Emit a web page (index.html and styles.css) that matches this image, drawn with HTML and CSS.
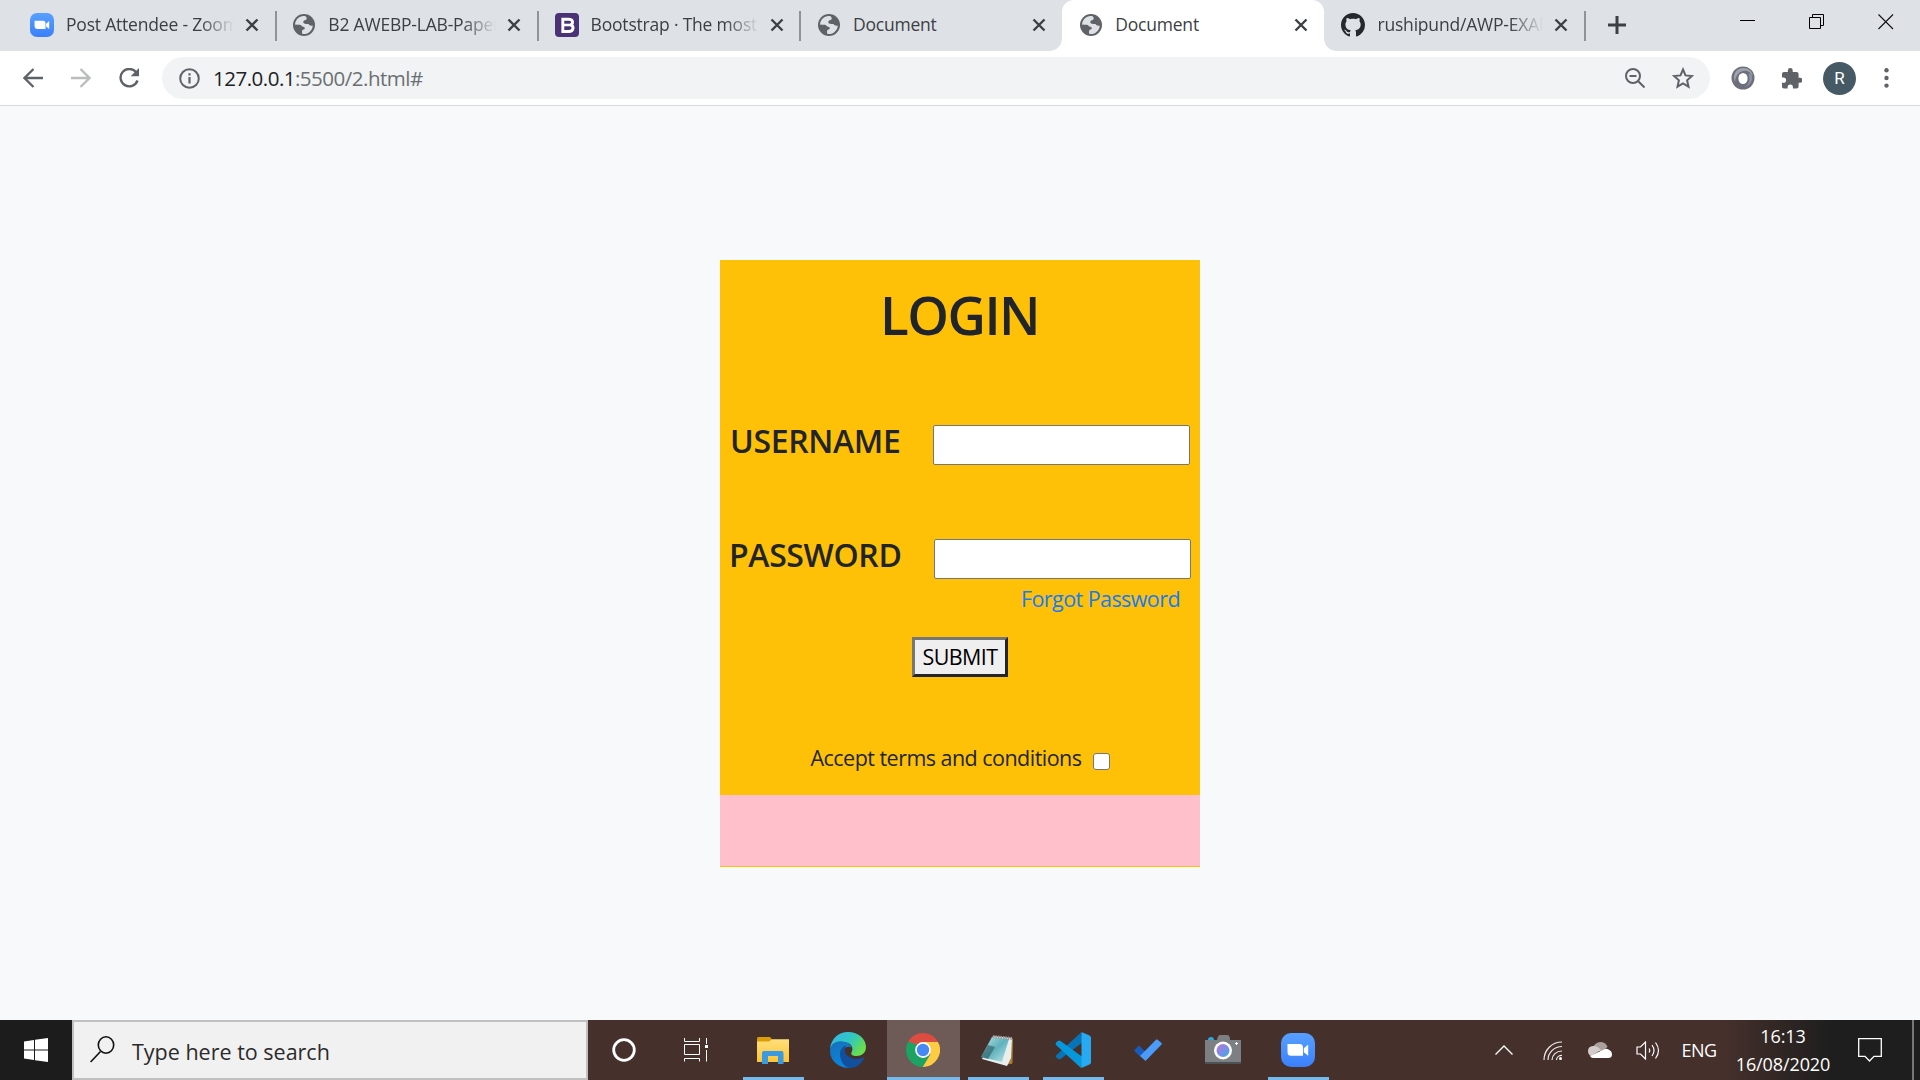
FILE: index.html
```html
<!DOCTYPE html>
<html lang="en">
<head>
<meta charset="utf-8">
<title>Document</title>
<link rel="stylesheet" href="styles.css">
</head>
<body>
<svg class="defs" width="0" height="0">
  <symbol id="globe" viewBox="0 0 24 24"><circle cx="12" cy="12" r="11" fill="#5f6368"/><path d="M13.500 3.200C8 2 3.500 6 3 11.500c2.500.8 6 0 6.500 1.200.6 1.800 3 .6 3.300 2.300.2 1.800-2.600 1.300-2.800 3.200-.1 1.200.2 2.200.4 2.800 5.500.8 10-3.200 10.400-8.500-2 .8-3.500-.3-4.300-1.500-1.600-.2-5 .4-5.200-1.700-.2-2.400 3.200-1.600 3.400-3.500.1-1-.3-1.800-1.200-2.600z" fill="#dee1e6"/></symbol>
  <symbol id="x" viewBox="0 0 14 14"><path d="M1.500 1.500l11 11M12.500 1.500l-11 11" stroke="#3c4043" stroke-width="2.400" fill="none"/></symbol>
  <linearGradient id="zoomBlue" x2="0" y2="1"><stop stop-color="#57a0ff"/><stop offset="1" stop-color="#3b80fb"/></linearGradient>
  <symbol id="zoom" viewBox="0 0 34 34"><rect width="34" height="34" rx="10" fill="url(#zoomBlue)"/><path d="M6.500 11h12a3.500 3.500 0 0 1 3.500 3.500v8.300H10a3.500 3.500 0 0 1-3.500-3.500zM22.800 15.200l4.400-3.700v11.200l-4.400-3.400z" fill="#fff"/></symbol>
</svg>

<header class="tabs">
  <div class="tab"><svg class="fav"><use href="#zoom"/></svg><span class="title faded">Post Attendee - Zoom</span><svg class="close"><use href="#x"/></svg></div>
  <div class="tab"><svg class="fav"><use href="#globe"/></svg><span class="title faded">B2 AWEBP-LAB-Paper</span><svg class="close"><use href="#x"/></svg></div>
  <div class="tab"><svg class="fav" viewBox="0 0 24 24"><rect width="24" height="24" rx="4" fill="#4b3175"/><path d="M7.800 6.300h5.800c5 0 4.800 4.800 1.700 5.500 4.200.9 3.500 6.700-1.500 6.700h-6z" fill="none" stroke="#fff" stroke-width="2.900"/><path d="M8 12h7" stroke="#fff" stroke-width="2.600"/></svg><span class="title faded">Bootstrap · The most p</span><svg class="close"><use href="#x"/></svg></div>
  <div class="tab before-active"><svg class="fav"><use href="#globe"/></svg><span class="title">Document</span><svg class="close"><use href="#x"/></svg></div>
  <div class="tab active"><svg class="fav"><use href="#globe"/></svg><span class="title">Document</span><svg class="close"><use href="#x"/></svg></div>
  <div class="tab final"><svg class="fav" viewBox="0 0 16 16"><path fill="#24292e" d="M8 0C3.580 0 0 3.580 0 8c0 3.540 2.290 6.530 5.470 7.590.4.070.55-.17.55-.38 0-.19-.01-.82-.01-1.490-2.010.37-2.530-.49-2.690-.94-.09-.23-.48-.94-.82-1.130-.28-.15-.68-.52-.01-.53.63-.01 1.080.58 1.230.82.720 1.210 1.870.87 2.330.66.070-.52.280-.87.510-1.070-1.780-.2-3.640-.89-3.640-3.950 0-.87.310-1.590.82-2.150-.08-.2-.36-1.020.08-2.120 0 0 .67-.21 2.200.82.640-.18 1.320-.27 2-.27s1.360.09 2 .27c1.530-1.040 2.200-.82 2.200-.82.440 1.100.16 1.920.08 2.120.51.560.82 1.270.82 2.150 0 3.070-1.870 3.750-3.650 3.950.29.250.54.730.54 1.480 0 1.070-.01 1.930-.01 2.200 0 .21.150.46.550.38A8.010 8.010 0 0 0 16 8c0-4.420-3.580-8-8-8z"/></svg><span class="title faded">rushipund/AWP-EXAM</span><svg class="close"><use href="#x"/></svg></div>
  <svg class="newtab" viewBox="0 0 18 18"><path d="M9 0v18M0 9h18" stroke="#3c4043" stroke-width="3"/></svg>
  <div class="window-buttons">
    <svg viewBox="0 0 16 16"><path d="M0 6.500h15" stroke="#000"/></svg>
    <svg viewBox="0 0 16 16"><path d="M.5 3.500h11v11H.5zM3.500 3.500v-3h11v11h-3" fill="none" stroke="#000"/></svg>
    <svg viewBox="0 0 16 16"><path d="M.5.5l14.500 14.500M15 .5L.5 15" stroke="#111" stroke-width="1.100"/></svg>
  </div>
</header>

<nav class="toolbar">
  <div class="nav-buttons">
    <svg viewBox="0 0 20 20"><path d="M20 10H2M10.500 1L1.500 10l9 9" fill="none" stroke="#5f6368" stroke-width="2.300"/></svg>
    <svg viewBox="0 0 20 20"><path d="M0 10h18M9.500 1l9 9-9 9" fill="none" stroke="#babcbe" stroke-width="2.300"/></svg>
    <svg viewBox="0 0 20 20"><path d="M17.300 4.500A8.700 8.700 0 1 0 18.500 12.500" fill="none" stroke="#5f6368" stroke-width="2.400"/><path d="M20 0v8.300h-8.300z" fill="#5f6368"/></svg>
  </div>
  <div class="address">
    <svg class="info" viewBox="0 0 21 21"><circle cx="10.500" cy="10.500" r="9.300" fill="none" stroke="#5f6368" stroke-width="2"/><path d="M10.500 9v6.500M10.500 5.300v2.300" stroke="#5f6368" stroke-width="2.200"/></svg>
    <span class="url"><b>127.0.0.1</b>:5500/2.html#</span>
    <svg class="lens" viewBox="0 0 20 20"><g fill="none" stroke="#5f6368" stroke-width="2"><circle cx="8" cy="8" r="7"/><path d="M4.500 8h7M13 13l6.500 6.500"/></g></svg>
    <svg class="star" viewBox="0 0 22 22"><path d="M11 2.500l2.500 5.900 6.400.6-4.800 4.300 1.400 6.300L11 16.300l-5.500 3.300 1.400-6.300L2.100 9l6.400-.6z" fill="none" stroke="#5f6368" stroke-width="2"/></svg>
  </div>
  <svg class="ext" viewBox="0 0 24 24"><circle cx="12" cy="12" r="11.500" fill="#6c6f7b"/><path d="M4 16C1 9 5 2 12.500 2c5 0 8.500 3 9.500 8-3-5-8-6.500-12.500-4C6 8 4.500 11 4 16z" fill="#a0a3ad"/><path d="M20 7c3 6 0 12-6 14 4-3 5.500-8 3.500-13z" fill="#8d90a0"/><ellipse cx="12" cy="12.500" rx="4.600" ry="5.600" fill="#fff"/></svg>
  <svg class="puzzle" viewBox="1 1 21.500 21.500"><path fill="#5f6368" d="M20.500 11H19V7c0-1.100-.9-2-2-2h-4V3.500a2.500 2.500 0 0 0-5 0V5H4c-1.100 0-2 .9-2 2v3.800h1.500a2.700 2.700 0 0 1 0 5.400H2V20c0 1.100.9 2 2 2h3.800v-1.500a2.700 2.700 0 0 1 5.400 0V22H17c1.100 0 2-.9 2-2v-4h1.500a2.500 2.500 0 0 0 0-5z"/></svg>
  <span class="avatar">R</span>
  <svg class="dots" viewBox="0 0 5 20"><g fill="#5f6368"><circle cx="2.500" cy="2.300" r="2.200"/><circle cx="2.500" cy="10" r="2.200"/><circle cx="2.500" cy="17.600" r="2.200"/></g></svg>
</nav>

<main class="page">
  <form class="card">
    <h1>LOGIN</h1>
    <div class="row"><label class="user" for="user">USERNAME</label><input id="user" class="field" type="text"></div>
    <div class="row second"><label class="pass" for="pass">PASSWORD</label><input id="pass" class="field" type="password"></div>
    <a class="forgot" href="#">Forgot Password</a>
    <button class="submit" type="button">SUBMIT</button>
    <label class="accept"><span>Accept terms and conditions</span><input class="check" type="checkbox"></label>
    <div class="pink"></div>
  </form>
</main>

<footer class="taskbar">
  <div class="start"><svg width="24" height="24" viewBox="0 0 24 24"><path fill="#fff" d="M0 3.400l10-1.400v9.500H0zM11 1.800L24 0v11.500H11zM0 12.500h10V22L0 20.600zM11 12.500h13V24l-13-1.800z"/></svg></div>
  <div class="search"><svg width="25" height="28" viewBox="0 0 25 28"><g fill="none" stroke="#111" stroke-width="1.600"><ellipse cx="16" cy="9" rx="7.700" ry="8.200"/><path d="M10.500 15.500L.6 26"/></g></svg><span>Type here to search</span></div>
  <div class="apps">
    <div class="app sys"><svg width="24" height="24" viewBox="0 0 24 24"><circle cx="12" cy="12" r="10.300" fill="none" stroke="#fff" stroke-width="2.800"/></svg></div>
    <div class="app sys last"><svg width="24" height="24" viewBox="0 0 24 24"><path d="M.5 0v3.500h15V0M.5 6.500h15v10H.5zM.5 23.500v-3h15v3M22.500 0v6M22.500 12v11.500" fill="none" stroke="#fff"/><path d="M21 7h3v3h-3z" fill="#fff"/></svg></div>
    <div class="app open"><svg width="32" height="27" viewBox="0 0 32 27"><defs><linearGradient id="fold" x2="0" y2="1"><stop stop-color="#ffe07b"/><stop offset="1" stop-color="#fcc436"/></linearGradient></defs><path d="M0 1.500Q0 0 1.500 0H13l2 2.200V6H0z" fill="#dc9c07"/><path d="M0 4.500h12l3-2.300h17V25H0z" fill="url(#fold)"/><path d="M5 27V16q0-2 2-2h17.500q2 0 2 2v11H21v-8H11v8z" fill="#3999e2"/></svg></div>
    <div class="app"><svg width="36" height="36" viewBox="0 0 36 36"><defs><linearGradient id="e1" y2=".5"><stop stop-color="#35b5ef"/><stop offset=".6" stop-color="#31c7bd"/><stop offset="1" stop-color="#67df4e"/></linearGradient><linearGradient id="e2" x2=".4" y2="1"><stop stop-color="#1670b8"/><stop offset="1" stop-color="#0b85df"/></linearGradient></defs><path d="M0 17C1 7 8 0 18 0c11 0 18 7.500 18 15 0 6-4.500 9-9.500 9-4 0-6-1.500-5-3.500 2-3.500 1-8.500-5-10C9 9 3 11 0 17z" fill="url(#e1)"/><path d="M0 18C1 11 7 8.500 13 9.500c5 .8 8 3.500 8.500 6-6-3-10 3-8 10 1.500 5 6 9 11 9C12 39-.5 30 0 18z" fill="url(#e2)"/><path d="M10 22c0-4.500 2.500-7.500 6-8.500-2 4-1.500 8 2 10.500 4 3 10 4 15.500 1.500.8 0 1 .5.500 1.200C31 32 26.500 36 21 36c-6.500 0-11-7-11-14z" fill="#124f9c"/></svg></div>
    <div class="app open current"><svg width="34" height="34" viewBox="0 0 34 34"><path d="M17 17L2.300 8.500A17 17 0 0 1 31.700 8.500z" fill="#dc4c41"/><path d="M2.300 8.500A17 17 0 0 0 17 34l7.400-12.700L17 17z" fill="#1ca261"/><path d="M31.700 8.500A17 17 0 0 1 16.700 34l7.700-12.700L17 9h14.900z" fill="#fecc43"/><path d="M2.300 8.500L9.600 21.300 12 12z" fill="#1ca261"/><circle cx="17" cy="17" r="7.900" fill="#fff"/><circle cx="17" cy="17" r="6.200" fill="#4688f4"/></svg></div>
    <div class="app open notepad"><svg width="34" height="33" viewBox="0 0 34 33"><defs><linearGradient id="np" x2="1" y2="1"><stop stop-color="#bfe3e6"/><stop offset=".5" stop-color="#5fb2bd"/><stop offset="1" stop-color="#c3e8eb"/></linearGradient></defs><path d="M30 4l3 .5-.5 25-5 1z" fill="#a87d35"/><path d="M13 2l19 2-1 20-4 8L2 25z" fill="#e9efed"/><path d="M12 3l17 2-7 23L1 23z" fill="url(#np)"/><path d="M8 11L1 23l7 2 7-12z" fill="#315f65" opacity=".65"/><path d="M13 2.500l19 2" stroke="#999" stroke-width="3" stroke-dasharray="1.500 1"/></svg></div>
    <div class="app open"><svg width="36" height="36" viewBox="0 0 36 36"><path d="M1 23.500L26 .5l2 9.500L5.500 27q-1.300.8-2.500-.2L1 25q-.8-.8 0-1.500z" fill="#0874b8"/><path d="M1 10.500L3 9q1.200-1 2.500 0L29 26l-3 10L1 13q-.8-1.200 0-2.500z" fill="#0797db"/><path d="M26.500 0L34.500 3.500q1.500.8 1.500 2.300v24.500q0 1.500-1.500 2.300L26.500 36z" fill="#28aaf2"/></svg></div>
    <div class="app"><svg width="28" height="22" viewBox="0 0 28 22"><path d="M0 11.500l5-5 6.500 6.500-5.500 4.500z" fill="#195abd"/><path d="M6 17l16-16.300q.8-.7 1.600 0L27.500 4q.7.800 0 1.500L11.500 22z" fill="#4b9bfa"/></svg></div>
    <div class="app"><svg width="36" height="30" viewBox="0 0 36 30"><path d="M3 5q0-3 3-3t3 3z" fill="#2aa9df"/><path d="M0 5h12q1-5 3-5h7q3 0 3 5h11v22H0z" fill="#7c8083"/><path d="M0 27h36v2H0z" fill="#4b5155"/><circle cx="18" cy="15.500" r="9" fill="#fff"/><defs><linearGradient id="cam" x2="1" y2="1"><stop offset=".2" stop-color="#a87ddd"/><stop offset="1" stop-color="#39a9ec"/></linearGradient></defs><circle cx="18" cy="15.500" r="6.500" fill="url(#cam)"/><path d="M31.500 7v3M30 8.500h3" stroke="#fff"/></svg></div>
    <div class="app open"><svg width="34" height="34"><use href="#zoom"/></svg></div>
  </div>
  <div class="tray">
    <svg width="18" height="10" viewBox="0 0 18 10"><path d="M.5 9.500L9 1l8.500 8.500" fill="none" stroke="#fff" stroke-width="1.400"/></svg>
    <svg class="wifi" width="20" height="19" viewBox="0 0 20 19"><g fill="none" stroke="#eee" stroke-width="1.200"><path d="M1 19C1 9 9 1 19 1"/><path d="M5 19C5 11.500 11.500 5.500 19 5.500"/><path d="M9 19c0-5 4.500-9 10-9M13.500 19c0-2.800 2.500-4.700 5.500-4.700"/></g><circle cx="17.500" cy="17.500" r="1.500" fill="#fff"/></svg>
    <svg width="24" height="16" viewBox="0 0 24 16"><path d="M5 5Q8 0 13 0q5 .5 6.500 5L13 10z" fill="#aaa09d"/><path d="M3 14Q0 12.500 0 9q0-4.500 5-5 4-.5 8 4z" fill="#d2cccb"/><path d="M2 14l13-6q3-2 5.500-.5 3.500 1.500 3.500 5 0 3.500-4 3.500H5q-2 0-3-2z" fill="#fff"/></svg>
    <svg width="24" height="19" viewBox="0 0 24 19"><g fill="none" stroke="#fff" stroke-width="1.200"><path d="M1 6h3.500l5-5v17l-5-5H1z"/><path d="M13 7.500q1.500 2 0 4M16 4q4 5.500 0 11M19.500 1.500q6 8 0 16"/></g></svg>
    <span class="lang">ENG</span>
    <div class="clock"><span class="time">16:13</span><span class="date">16/08/2020</span></div>
    <svg width="24" height="24" viewBox="0 0 24 24"><path d="M.7.700h22.600v17.600H16L11.500 23 7 18.300H.7z" fill="none" stroke="#fff" stroke-width="1.300"/></svg>
    <i class="divider"></i>
  </div>
</footer>
</body>
</html>
```
FILE: styles.css
```css
* { box-sizing: border-box; }
body {
  margin: 0;
  width: 1920px;
  height: 1080px;
  overflow: hidden;
  display: flex;
  flex-direction: column;
  font-family: "Open Sans", "Noto Sans", sans-serif;
  background: #f8f9fa;
}
svg { display: block; flex: none; }
.defs { position: absolute; }

/* tab strip */
.tabs { display: flex; height: 51px; flex: none; background: #dee1e6; padding-left: 13px; }
.tab { position: relative; display: flex; align-items: center; width: 262.300px; height: 51px; padding: 0 16px 1px 17px; flex: none; }
.tab::after { content: ""; width: 2px; height: 30px; position: absolute; right: -1.500px; top: 11px; background: #90949a; }
.before-active::after { display: none; }
.final { width: 260px; }
.fav { width: 24px; height: 24px; }
.title {
  width: 168px; margin: -2px 0 0 12px; overflow: hidden; white-space: nowrap;
  font-size: 17.500px; line-height: 28px; color: #3c4043; letter-spacing: -.2px;
}
.faded {
  -webkit-mask-image: linear-gradient(90deg, #000 80%, transparent);
  mask-image: linear-gradient(90deg, #000 80%, transparent);
}
.final .title { width: 166px; }
.close { width: 14px; height: 14px; margin-left: 11px; }
.active { background: #fff; border-radius: 12px 12px 0 0; }
.active::before, .active::after {
  content: ""; position: absolute; top: auto; bottom: 0; width: 12px; height: 12px;
}
.active::before { left: -12px; background: radial-gradient(circle at 0 0, transparent 11.500px, #fff 12px); }
.active::after { right: -12px; background: radial-gradient(circle at 100% 0, transparent 11.500px, #fff 12px); }
.newtab { width: 18px; height: 18px; margin: 16px 0 0 24px; }
.window-buttons { display: flex; gap: 53px; margin: 14px 26px 0 auto; }
.window-buttons svg { width: 16px; height: 16px; }

/* toolbar */
.toolbar { display: flex; align-items: center; height: 55px; flex: none; background: #fff; border-bottom: 1px solid #d8dadd; }
.nav-buttons { display: flex; gap: 28px; padding-left: 23px; width: 162px; }
.nav-buttons svg { width: 20px; height: 20px; }
.address { display: flex; align-items: center; width: 1548px; height: 42px; border-radius: 21px; background: #f1f3f4; padding: 0 16px 0 17px; }
.info { width: 21px; height: 21px; }
.url { margin: 0 auto 0 13px; font-size: 20.500px; line-height: 30px; letter-spacing: -.5px; color: #6b6f73; }
.url b { font-weight: 400; color: #202124; }
.lens { width: 20px; height: 20px; }
.star { width: 22px; height: 22px; margin-left: 27px; }
.ext { width: 24px; height: 24px; margin-left: 21px; }
.puzzle { width: 21px; height: 21px; margin-left: 26px; }
.avatar { width: 33px; height: 33px; margin-left: 21px; border-radius: 50%; background: #455a64; color: #fff; font: 17px/33px Roboto, sans-serif; text-align: center; }
.dots { width: 5px; height: 20px; margin-left: 28px; }

/* login page */
.page { flex: 1; display: flex; justify-content: center; align-items: flex-start; padding-top: 154px; background: #f8f9fa; }
.card { width: 480px; height: 607px; padding-top: 23px; display: flex; flex-direction: column; align-items: center; background: #ffc107; color: #212529; }
h1 { margin: 0 0 73px; font-size: 53px; line-height: 64px; font-weight: 600; letter-spacing: -1.500px; text-indent: -1px; }
.row { display: flex; align-items: flex-start; justify-content: space-between; width: 100%; height: 45px; padding: 0 10px; font-size: 32px; line-height: 42px; font-weight: 600; margin-bottom: 69px; }
.row.second { padding: 0 9px; margin-bottom: 5px; }
.row label { white-space: nowrap; letter-spacing: -.350px; }
.field { width: 257px; height: 40px; margin: 5px 0 0; border: 1px solid #767676; border-radius: 2px; background: #fff; flex: none; }
.forgot { align-self: flex-end; margin: 0 20px 23px 0; font-size: 21.500px; line-height: 30px; letter-spacing: -.570px; color: #167bf7; text-decoration: none; white-space: nowrap; }
.submit { width: 96px; height: 40px; padding: 0; margin: 0 0 66px; border: 3px solid; border-color: #767676 #212529 #212529 #767676; background: #efefef; color: #000; font: 21.500px/32px "Open Sans", sans-serif; letter-spacing: -.6px; white-space: nowrap; }
.accept { display: flex; align-items: center; width: 299px; margin-bottom: 22px; height: 30px; font-size: 21.500px; line-height: 30px; letter-spacing: -.530px; white-space: nowrap; justify-content: space-between; }
.check { appearance: none; flex: none; width: 17px; height: 17px; margin: 6px 0 0; border: 1px solid #767676; border-radius: 3px; background: #fff; }
.pink { width: 100%; height: 71px; background: #ffc0cb; }

/* taskbar */
.taskbar { display: flex; height: 60px; flex: none; color: #fff; background: linear-gradient(90deg, #45302b 0, #45302b 1725px, #1e1e1e 1830px); }
.start { width: 72px; display: flex; align-items: center; justify-content: center; background: #1c1c1c; }
.search { width: 516px; display: flex; align-items: center; border: 2px solid #c0c0c0; background: #f1f1f1; color: #2b2b2b; padding: 0 0 0 16px; font-size: 21.500px; }
.search span { margin: 2px 0 0 17px; }
.apps { display: flex; }
.app { width: 75px; height: 60px; display: flex; align-items: center; justify-content: center; position: relative; }
.app svg { margin-right: 1px; }
.app.sys svg { margin-right: 0; }
.app.notepad svg { margin-right: 4px; }
.sys { width: 72px; }
.last { margin-right: 4px; }
.open::after { content: ""; position: absolute; bottom: 0; left: 7px; width: 61px; height: 3px; background: #76b9ed; }
.current { background: #6e5a57; width: 73px; margin: 0 1px; }
.current::after { left: 0; width: 73px; }
.tray { margin-left: auto; display: grid; grid-template-columns: 48px 48px 48px 48px 54px 114px 60px 12px 8px; align-items: center; justify-items: center; }
.wifi { margin-left: 2px; }
.lang { font-size: 18px; letter-spacing: -.5px; }
.clock { display: flex; flex-direction: column; align-items: center; font-size: 18px; line-height: 28px; letter-spacing: -.1px; }
.divider { grid-column: 9; justify-self: start; width: 2px; height: 60px; background: #777; }
```
